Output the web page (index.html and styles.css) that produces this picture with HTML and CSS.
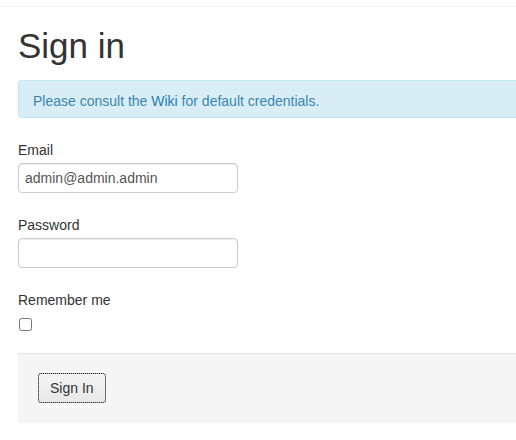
FILE: index.html
```html
<!DOCTYPE html>
<html lang="en">
<head>
<meta charset="utf-8">
<title>Sign in</title>
<link rel="stylesheet" href="styles.css">
</head>
<body>
<div class="topbar"></div>
<div class="container">
  <h1 class="title">Sign in</h1>
  <div class="alert">Please consult the <a href="#" class="alert-link">Wiki</a> for default credentials.</div>
  <form class="form">
    <div class="group">
      <label class="label" for="email">Email</label>
      <input class="input" id="email" type="text" value="admin@admin.admin">
    </div>
    <div class="group">
      <label class="label" for="password">Password</label>
      <input class="input" id="password" type="password">
    </div>
    <div class="group group-check">
      <label class="label" for="remember">Remember me</label>
      <div class="check-row"><input class="check" id="remember" type="checkbox"></div>
    </div>
    <div class="actions">
      <button type="button" class="btn">Sign In</button>
    </div>
  </form>
</div>
</body>
</html>
```

FILE: styles.css
```css
html, body {
  margin: 0;
  padding: 0;
  background: #ffffff;
}
body {
  font-family: "Liberation Sans", Arial, Helvetica, sans-serif;
  font-size: 14px;
  line-height: 20px;
  color: #333333;
  overflow: hidden;
}
.topbar {
  height: 6px;
  border-bottom: 1px solid #f4f4f4;
}
.container {
  padding-left: 18px;
}
.title {
  font-size: 35px;
  line-height: 40px;
  font-weight: normal;
  margin: 19px 0 14px;
  color: #333333;
}
.alert {
  background: #d9edf7;
  border: 1px solid #bce8f1;
  border-right: none;
  border-radius: 4px 0 0 4px;
  color: #3a87ad;
  padding: 10px 35px 6px 14px;
  margin-bottom: 20px;
}
.alert-link {
  color: #2380b4;
  text-decoration: none;
}
.form {
  margin: 0;
}
.group {
  display: flex;
  flex-direction: column;
  align-items: flex-start;
  margin-bottom: 20px;
}
.label {
  display: block;
  padding-top: 2px;
  margin-bottom: 3px;
  line-height: 20px;
}
.input {
  box-sizing: border-box;
  width: 220px;
  height: 30px;
  padding: 4px 6px;
  margin: 0;
  font-family: inherit;
  font-size: 14px;
  line-height: 20px;
  color: #555555;
  background: #ffffff;
  border: 1px solid #cccccc;
  border-radius: 4px;
  box-shadow: inset 0 1px 1px rgba(0,0,0,0.075);
  outline: none;
}
.check-row {
  height: 20px;
}
.check {
  width: 13px;
  height: 13px;
  margin: 5px 0 0 1px;
  display: block;
}
.actions {
  background: #f5f5f5;
  border-top: 1px solid #e5e5e5;
  padding: 19px 20px 20px;
}
.btn {
  box-sizing: border-box;
  height: 30px;
  padding: 4px 11px;
  font-family: inherit;
  font-size: 14px;
  line-height: 20px;
  color: #333333;
  background: linear-gradient(#f4f4f4, #e8e8e8);
  border: 1px solid #bbbbbb;
  border-radius: 3px;
  outline: 1px dotted #222222;
  outline-offset: -1px;
  cursor: pointer;
}
```
